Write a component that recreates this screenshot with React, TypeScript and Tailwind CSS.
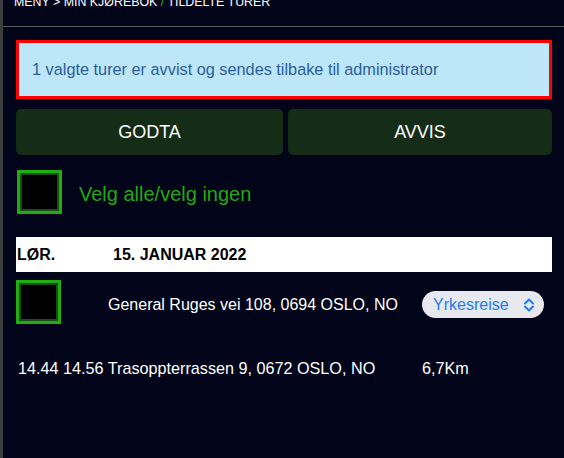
export default function App() {
  return (
    <div className="flex h-[458px] w-[564px] overflow-hidden bg-[#02051a] font-['Liberation_Sans',Arial,sans-serif]">
      <div className="w-[3px] shrink-0 bg-[#3d3d40]" />
      <div className="flex-1">
        {/* breadcrumb */}
        <div className="flex h-[27px] flex-col border-b border-[#5b5b5f]">
          <p className="-mt-[6px] pl-[11px] text-[12.4px] leading-[16px] text-white">
            MENY &gt; MIN KJØREBOK <span className="text-[#2fb314]">/</span> TILDELTE TURER
          </p>
        </div>

        <div className="pl-[13px] pr-[12px]">
          <div className="mt-[13px] flex h-[59px] items-center border-[3px] border-[#ff0000] bg-[#bde6f8] pl-[13px]">
            <p className="text-[16.3px] text-[#2b5d9c]">1 valgte turer er avvist og sendes tilbake til administrator</p>
          </div>

          <div className="mt-[10px] flex gap-[5px]">
            <button className="h-[46px] w-[267px] rounded-[5px] bg-[#152d16] text-[18px] text-white">GODTA</button>
            <button className="h-[46px] flex-1 rounded-[5px] bg-[#152d16] text-[18px] text-white">AVVIS</button>
          </div>

          <div className="mt-[15px] flex items-start gap-[17px] pl-[1px]">
            <Box />
            <span className="mt-[9px] text-[20px] leading-[30px] text-[#26a515]">Velg alle/velg ingen</span>
          </div>

          <div className="mt-[23px] flex h-[35px] items-center bg-white pl-[1px] text-[16px] font-bold text-black">
            <span className="w-[96px]">LØR.</span>
            <span>15. JANUAR 2022</span>
          </div>

          <div className="mt-[8px] flex items-start">
            <Box />
            <span className="ml-[47px] mt-[13px] w-[314px] shrink-0 text-[16px] text-white">General Ruges vei 108, 0694 OSLO, NO</span>
            <div className="mt-[11px] flex h-[27px] w-[122px] items-center justify-between rounded-full bg-[#e8e9ef] pl-[11px] pr-[9px]">
              <span className="text-[16px] text-[#1b7cf4]">Yrkesreise</span>
              <svg width="12" height="14" viewBox="0 0 12 14" fill="none" stroke="#1b7cf4" strokeWidth="2" strokeLinecap="round" strokeLinejoin="round">
                <path d="M2 5.5 6 1.5l4 4" />
                <path d="M2 8.5l4 4 4-4" />
              </svg>
            </div>
          </div>

          <div className="mt-[32px] flex items-center text-[16.2px] text-white">
            <span className="w-[406px] pl-[2px]">14.44 14.56 Trasoppterrassen 9, 0672 OSLO, NO</span>
            <span>6,7Km</span>
          </div>
        </div>
      </div>
    </div>
  );
}

function Box() {
  return (
    <div className="h-[44px] w-[45px] shrink-0 border-[3px] border-[#21ad12] bg-black">
      <div className="h-full w-full border-[2px] border-[#1b4f19] bg-black" />
    </div>
  );
}
